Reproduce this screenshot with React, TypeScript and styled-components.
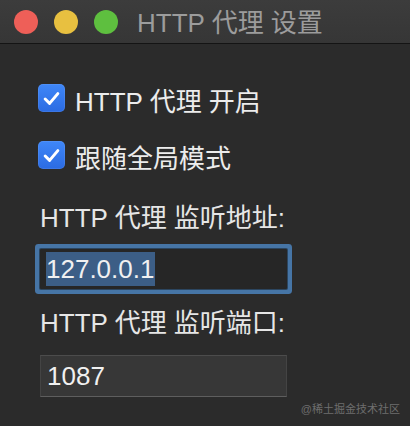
import React from 'react';
import styled, { createGlobalStyle } from 'styled-components';

const GlobalStyle = createGlobalStyle`
  html, body {
    margin: 0;
    padding: 0;
    background: #2b2b2b;
  }
  body {
    font-family: "Liberation Sans", "Noto Sans CJK SC", sans-serif;
  }
`;

const Window = styled.div`
  width: 410px;
  height: 426px;
  background: #2b2b2b;
  display: flex;
  flex-direction: column;
  overflow: hidden;
`;

const TitleBar = styled.div`
  height: 43px;
  flex-shrink: 0;
  display: flex;
  align-items: center;
  padding-left: 14px;
  background: linear-gradient(#3c3c3c, #363636);
  border-bottom: 1px solid #141414;
`;

const Lights = styled.div`
  display: flex;
  gap: 16px;
  margin-right: 19px;
  margin-top: 1px;
`;

const Light = styled.span<{ $color: string }>`
  width: 24px;
  height: 24px;
  border-radius: 50%;
  background: ${(p) => p.$color};
`;

const Title = styled.div`
  color: #9c9c9c;
  font-size: 26px;
  line-height: 30px;
  height: 30px;
  margin-top: 2px;
`;

const Content = styled.div`
  flex: 1;
  display: flex;
  flex-direction: column;
  padding: 40px 0 0 38px;
  position: relative;
`;

const CheckRow = styled.label<{ $gap?: number }>`
  display: flex;
  align-items: flex-start;
  gap: 10px;
  height: 28px;
  margin-top: ${(p) => p.$gap ?? 0}px;
`;

const Box = styled.span`
  width: 27px;
  height: 28px;
  border-radius: 5px;
  background: linear-gradient(#3f87f8, #2b6be2);
  box-shadow: inset 0 0 0 1px rgba(255, 255, 255, 0.08);
  display: flex;
  align-items: center;
  justify-content: center;
`;

const CheckText = styled.span`
  color: #ececec;
  font-size: 26px;
  line-height: 28px;
  height: 28px;
  margin-top: 4px;
  white-space: nowrap;
`;

const FieldLabel = styled.div<{ $gap: number }>`
  color: #e6e6e6;
  font-size: 26px;
  line-height: 28px;
  height: 28px;
  flex-shrink: 0;
  white-space: nowrap;
  margin-top: ${(p) => p.$gap}px;
  margin-left: 2px;
`;

const Field = styled.div<{ $focused?: boolean }>`
  width: 247px;
  box-sizing: border-box;
  flex-shrink: 0;
  display: flex;
  align-items: center;
  padding-left: 6px;
  color: #f0f0f0;
  font-size: 26px;
  margin-left: 2px;
  ${(p) =>
    p.$focused
      ? `
    height: 40px;
    margin-top: 17px;
    background: #262626;
    border-radius: 1px;
    box-shadow: 0 0 0 1px #2c4660, 0 0 0 5px #4675a6;
  `
      : `
    height: 42px;
    margin-top: 18px;
    background: #373737;
    border: 1px solid #444;
    border-top-color: #4c4c4c;
    border-bottom-color: #5e5e5e;
  `}
`;

const Selected = styled.span`
  background: #3c5e86;
  line-height: 34px;
  height: 34px;
  padding-right: 1px;
`;

const Watermark = styled.div`
  position: absolute;
  right: 10px;
  bottom: 10px;
  color: #6e6e6e;
  font-size: 11px;
  line-height: 13px;
`;

const Check = () => (
  <svg width="19" height="17" viewBox="0 0 18 16">
    <path d="M3 8.5 L7.2 12.6 L15 3.4" fill="none" stroke="#fff" strokeWidth="2.8" strokeLinecap="round" strokeLinejoin="round" />
  </svg>
);

const App = () => {
  return (
    <Window>
      <GlobalStyle />
      <TitleBar>
        <Lights>
          <Light $color="#ee5f58" />
          <Light $color="#e8c040" />
          <Light $color="#5ebf3f" />
        </Lights>
        <Title>HTTP 代理 设置</Title>
      </TitleBar>
      <Content>
        <CheckRow>
          <Box><Check /></Box>
          <CheckText>HTTP 代理 开启</CheckText>
        </CheckRow>
        <CheckRow $gap={29}>
          <Box><Check /></Box>
          <CheckText>跟随全局模式</CheckText>
        </CheckRow>
        <FieldLabel $gap={35}>HTTP 代理 监听地址:</FieldLabel>
        <Field $focused>
          <Selected>127.0.0.1</Selected>
        </Field>
        <FieldLabel $gap={20}>HTTP 代理 监听端口:</FieldLabel>
        <Field>1087</Field>
        <Watermark>@稀土掘金技术社区</Watermark>
      </Content>
    </Window>
  );
};

export default App;
